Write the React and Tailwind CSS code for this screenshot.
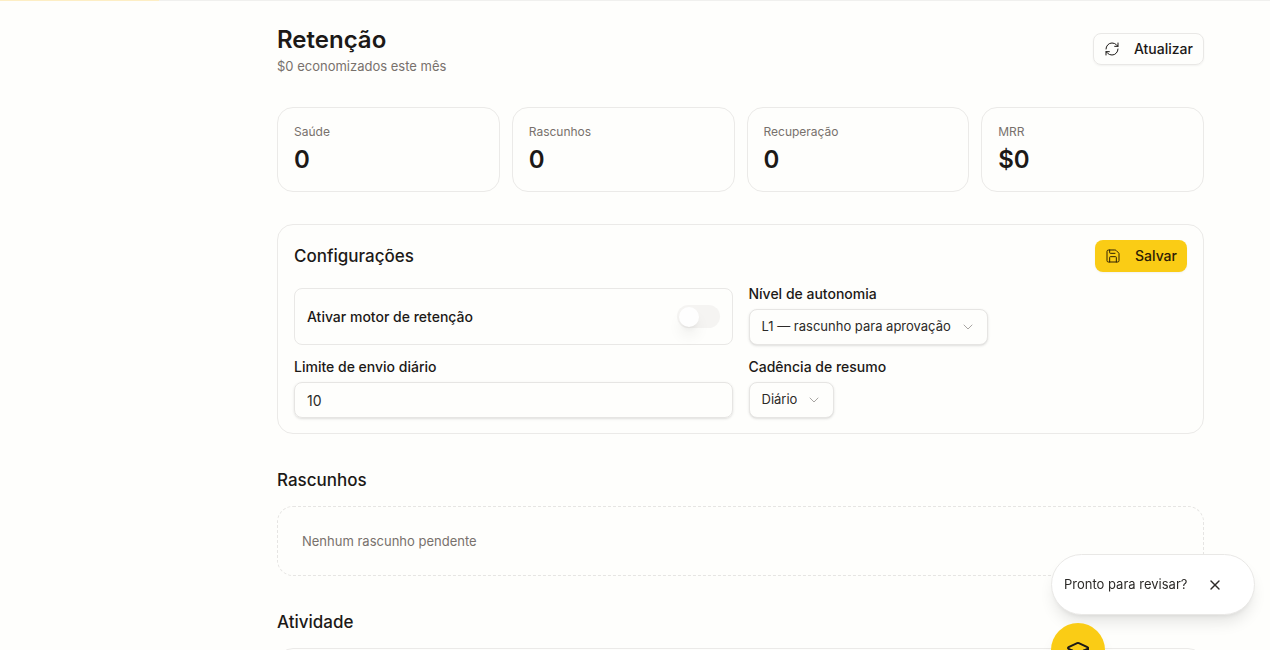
import { useState } from "react";
import { ChevronDown, GraduationCap, RefreshCw, Save, X } from "lucide-react";

const stats = [
  { label: "Saúde", value: "0" },
  { label: "Rascunhos", value: "0" },
  { label: "Recuperação", value: "0" },
  { label: "MRR", value: "$0" },
];

function SelectField({ id, label, options }) {
  return (
    <div className="flex flex-col items-start gap-[5px]">
      <label htmlFor={id} className="text-sm font-medium">{label}</label>
      <div className="relative">
        <select
          id={id}
          className="field-sizing-content h-9 appearance-none rounded-lg border border-[#e6e5e3] bg-[#fefefc] pr-9 pl-3 text-[13px] text-[#2c2a28] shadow-sm"
        >
          {options.map((o) => (
            <option key={o}>{o}</option>
          ))}
        </select>
        <ChevronDown className="pointer-events-none absolute top-2.5 right-3 size-4 text-[#a8a5a2]" strokeWidth={1.5} />
      </div>
    </div>
  );
}

export default function App() {
  const [enabled, setEnabled] = useState(false);
  const [showPrompt, setShowPrompt] = useState(true);

  return (
    <div className="h-screen overflow-hidden bg-[#fefefc] font-['Inter',sans-serif] text-[#1c1917]">
      <div className="h-px bg-[#f0f0ee]">
        <div className="h-px w-1/8 bg-[#fdeec4]" />
      </div>
      <main className="flex flex-col gap-8 pt-[22px] pr-[66px] pl-[277px]">
        <header className="flex items-center justify-between">
          <div>
            <h1 className="text-2xl leading-[34px] font-semibold">Retenção</h1>
            <p className="text-[13px] leading-[18px] text-[#78716c]">$0 economizados este mês</p>
          </div>
          <button className="flex h-8 items-center gap-[14px] rounded-lg border border-[#e9e8e6] px-2.5 text-sm font-medium shadow-xs">
            <RefreshCw className="size-4" strokeWidth={1.5} />
            Atualizar
          </button>
        </header>

        <section className="grid grid-cols-4 gap-3">
          {stats.map((s) => (
            <div key={s.label} className="h-[85px] rounded-2xl border border-[#ebeae8] px-4 pt-4">
              <div className="text-xs text-[#78716c]">{s.label}</div>
              <div className="mt-1 text-2xl font-semibold">{s.value}</div>
            </div>
          ))}
        </section>

        <section className="rounded-2xl border border-[#ebeae8] px-4 py-[15px]">
          <div className="flex items-center justify-between">
            <h2 className="text-[17px] leading-7 font-medium">Configurações</h2>
            <button className="flex h-8 items-center gap-[14px] rounded-lg bg-[#facc15] px-2.5 text-sm font-medium text-[#2e2005] shadow-xs">
              <Save className="size-4" strokeWidth={1.5} />
              Salvar
            </button>
          </div>
          <div className="mt-3 grid grid-cols-2 gap-x-4 gap-y-3">
            <div className="flex h-[57px] items-center justify-between self-end rounded-lg border border-[#e9e8e6] px-3">
              <label htmlFor="engine" className="text-sm font-medium">Ativar motor de retenção</label>
              <button
                id="engine"
                role="switch"
                aria-checked={enabled}
                onClick={() => setEnabled(!enabled)}
                className={`flex h-[23px] w-[43px] items-center rounded-full px-0.5 ${enabled ? "justify-end bg-[#facc15]" : "bg-[#f5f4f2]"}`}
              >
                <span className="size-5 rounded-full bg-[#fefefe] shadow-lg" />
              </button>
            </div>
            <SelectField id="autonomy" label="Nível de autonomia" options={["L1 — rascunho para aprovação"]} />
            <div className="flex flex-col gap-[5px]">
              <label htmlFor="limit" className="text-sm font-medium">Limite de envio diário</label>
              <input
                id="limit"
                inputMode="numeric"
                defaultValue="10"
                className="h-9 rounded-lg border border-[#e6e5e3] px-3 text-sm text-[#2c2a28] shadow-sm"
              />
            </div>
            <SelectField id="cadence" label="Cadência de resumo" options={["Diário"]} />
          </div>
        </section>

        <section className="flex flex-col gap-3">
          <h2 className="text-[17px] leading-7 font-medium">Rascunhos</h2>
          <div className="rounded-2xl border border-dashed border-[#e6e5e3] p-6 text-[13px] leading-5 text-[#78716c]">
            Nenhum rascunho pendente
          </div>
        </section>

        <section className="flex flex-col gap-3">
          <h2 className="text-[17px] leading-7 font-medium">Atividade</h2>
          <div className="h-20 rounded-2xl border border-[#ebeae8]" />
        </section>
      </main>

      {showPrompt && (
        <div className="fixed right-[15px] bottom-[35px] flex h-[61px] w-[204px] items-center gap-5 rounded-full border border-[#e9e8e6] bg-white pl-3 text-[13px] text-[#2c2a28] shadow-lg">
          Pronto para revisar?
          <button aria-label="Fechar" onClick={() => setShowPrompt(false)}>
            <X className="size-4" strokeWidth={2} />
          </button>
        </div>
      )}
      <button aria-label="Abrir assistente" className="fixed right-[165px] -bottom-[27px] flex size-[54px] items-center justify-center rounded-full bg-[#facc15] shadow-lg">
        <GraduationCap className="size-6" strokeWidth={2} />
      </button>
    </div>
  );
}
